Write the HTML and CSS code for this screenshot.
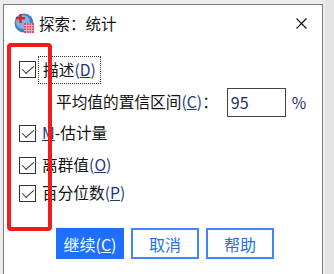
FILE: index.html
```html
<!DOCTYPE html>
<html lang="zh-CN">
<head>
    <meta charset="UTF-8">
    <title>探索：统计</title>
    <link rel="stylesheet" href="styles.css">
</head>
<body>
    <div class="side"></div>
    <div class="dialog">
        <div class="titlebar">
            <svg class="app-icon" width="21" height="21" viewBox="0 0 21 21">
                <circle cx="10" cy="10" r="9.5" fill="#3f7fc4"/>
                <circle cx="9" cy="9" r="7" fill="#7fb2e6"/>
                <rect x="2" y="4" width="9" height="2.4" fill="#e0201c"/>
                <rect x="5.3" y="1" width="2.4" height="9" fill="#e0201c"/>
                <rect x="10" y="10" width="10" height="10" fill="#e3456a"/>
                <path d="M10 12.5h10M10 15h10M10 17.5h10M12.5 10v10M15 10v10M17.5 10v10" stroke="#f6c0cf" stroke-width="0.8"/>
            </svg>
            <span class="title">探索：统计</span>
            <span class="close">
                <svg width="11" height="11" viewBox="0 0 11 11">
                    <path d="M0.5 0.5L10.5 10.5M10.5 0.5L0.5 10.5" stroke="#111" stroke-width="1.1"/>
                </svg>
            </span>
        </div>

        <div class="body">
            <div class="row row-first">
                <span class="check"></span>
                <span class="label focused">描述<span class="key">(<u>D</u>)</span></span>
            </div>
            <div class="row row-ci">
                <span class="label">平均值的置信区间<span class="key">(<u>C</u>)</span>：</span>
                <span class="input">95</span>
                <span class="pct">%</span>
            </div>
            <div class="row">
                <span class="check"></span>
                <span class="label"><span class="key"><u>M</u></span>-估计量</span>
            </div>
            <div class="row row-third">
                <span class="check"></span>
                <span class="label">离群值<span class="key">(<u>O</u>)</span></span>
            </div>
            <div class="row">
                <span class="check"></span>
                <span class="label">百分位数<span class="key">(<u>P</u>)</span></span>
            </div>

            <div class="buttons">
                <button class="btn primary">继续(<u>C</u>)</button>
                <button class="btn">取消</button>
                <button class="btn">帮助</button>
            </div>
        </div>

        <div class="marker"></div>
    </div>
</body>
</html>
```

FILE: styles.css
```css
body {
    margin: 0;
    width: 334px;
    height: 274px;
    overflow: hidden;
    background-color: #ececec;
    font-family: "Noto Sans CJK SC", "Noto Sans", sans-serif;
    color: #111;
    position: relative;
}
.side {
    position: absolute;
    right: 0;
    top: 0;
    width: 9px;
    height: 274px;
    background-color: #e4e4e4;
}
.dialog {
    position: relative;
    margin: 4px 0 0 3px;
    width: 320px;
    height: 272px;
    background-color: #fff;
    border: 1px solid #7a7a7a;
    box-sizing: border-box;
}
.titlebar {
    height: 38px;
    display: flex;
    align-items: center;
    padding-left: 10px;
}
.app-icon {
    margin-top: -1px;
}
.title {
    margin-left: 4px;
    font-size: 15.5px;
    line-height: 20px;
    margin-top: -2px;
}
.close {
    margin-left: auto;
    margin-right: 15px;
    margin-top: -1px;
    display: flex;
}
.body {
    padding-left: 15px;
}
.row {
    display: flex;
    align-items: center;
    height: 28px;
    font-size: 15.7px;
}
.row-first {
    margin-top: 12px;
    height: 29px;
}
.row-ci {
    height: 30px;
    margin-top: 3px;
    margin-bottom: 2px;
    padding-left: 37px;
}
.row-third {
    margin-top: 4px;
}
.check {
    width: 17px;
    height: 17px;
    border: 1.6px solid #333;
    box-sizing: border-box;
    position: relative;
    margin-right: 6px;
}
.check::after {
    content: "";
    position: absolute;
    left: 2px;
    top: 1px;
    width: 10px;
    height: 5px;
    border-left: 1.3px solid #333;
    border-bottom: 1.3px solid #333;
    transform: rotate(-42deg) translate(-1px, 2px);
}
.label {
    line-height: 20px;
}
.focused {
    outline: 1px dotted #333;
    outline-offset: 3px;
    padding: 0 1px;
}
.key {
    color: #1f3778;
}
.input {
    width: 59px;
    height: 29px;
    box-sizing: border-box;
    border: 1px solid #444;
    margin-left: 9px;
    padding-left: 3px;
    font-size: 16px;
    line-height: 27px;
    color: #1f2e66;
}
.pct {
    margin-left: 6px;
    color: #1f2e66;
}
.buttons {
    display: flex;
    gap: 7px;
    margin-top: 21px;
    margin-left: 37px;
}
.btn {
    width: 68px;
    height: 31px;
    box-sizing: border-box;
    border: 2px solid #3d86ff;
    background-color: #fff;
    color: #1f6ef5;
    font-family: inherit;
    font-size: 16px;
    padding: 0;
}
.btn.primary {
    background-color: #1e6fff;
    border-color: #1e6fff;
    color: #fff;
}
.marker {
    position: absolute;
    left: 3px;
    top: 38px;
    width: 45px;
    height: 188px;
    border: 4px solid #f21c1c;
    border-radius: 4px;
    box-sizing: border-box;
}
```
